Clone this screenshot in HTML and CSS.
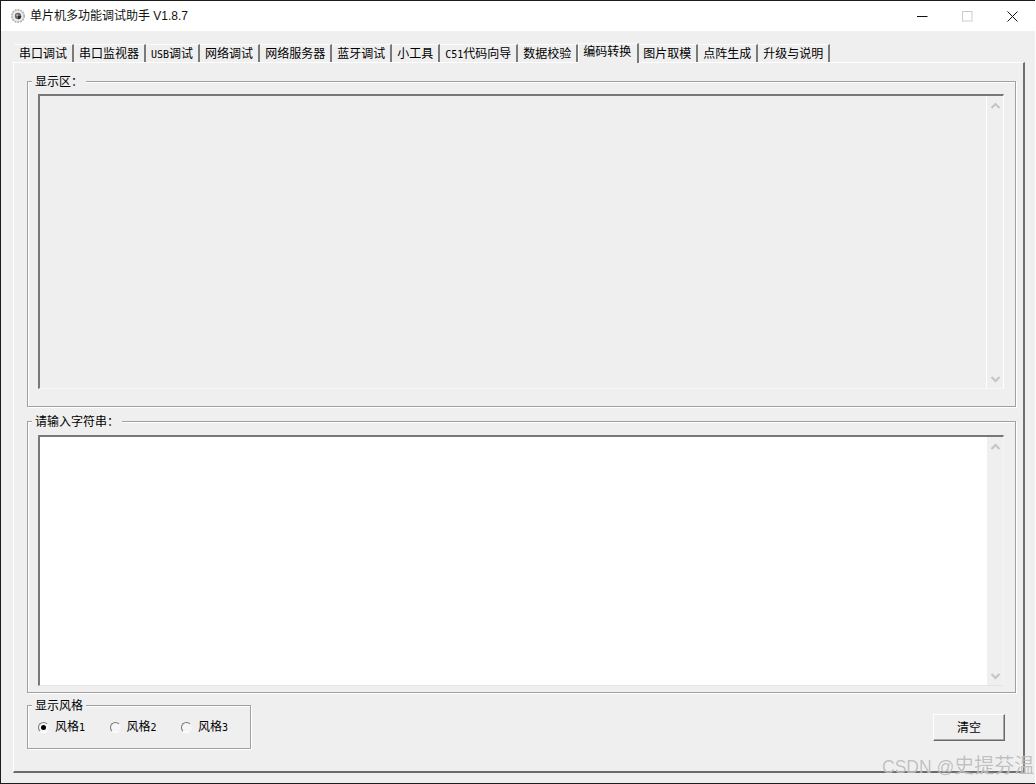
FILE: index.html
```html
<!DOCTYPE html>
<html lang="zh-CN">
<head>
<meta charset="utf-8">
<title>单片机多功能调试助手 V1.8.7</title>
<link rel="stylesheet" href="styles.css">
</head>
<body>
<div class="window">
  <header class="titlebar">
    <svg class="app-icon" width="16" height="16" viewBox="0 0 16 16">
      <circle cx="8" cy="8" r="6.2" fill="#e2e2e2" stroke="#b4b4b4" stroke-width="1.8" stroke-dasharray="1.8 1"/>
      <circle cx="8" cy="8" r="4.9" fill="#ededed"/>
      <circle cx="8" cy="8" r="3.2" fill="#6c6c6c"/>
      <path d="M8 11.2A3.2 3.2 0 0 0 11.2 8H8Z" fill="#2e2e2e"/>
      <circle cx="7.2" cy="7.2" r="1" fill="#bdbdbd"/>
    </svg>
    <span class="title">单片机多功能调试助手 V1.8.7</span>
    <div class="controls">
      <span class="ctrl"><svg width="11" height="11" viewBox="0 0 11 11"><path d="M0 5.5H10.5" stroke="#111" stroke-width="1"/></svg></span>
      <span class="ctrl"><svg width="11" height="11" viewBox="0 0 11 11"><rect x=".5" y=".5" width="9.5" height="9.5" fill="none" stroke="#ccc"/></svg></span>
      <span class="ctrl"><svg width="11" height="11" viewBox="0 0 11 11"><path d="M.5 .5L10.5 10.5M10.5 .5L.5 10.5" stroke="#111" stroke-width="1"/></svg></span>
    </div>
  </header>

  <nav class="tabs">
    <span class="tab">串口调试</span>
    <span class="tab">串口监视器</span>
    <span class="tab"><span class="lat">USB</span>调试</span>
    <span class="tab">网络调试</span>
    <span class="tab">网络服务器</span>
    <span class="tab">蓝牙调试</span>
    <span class="tab">小工具</span>
    <span class="tab"><span class="lat">C51</span>代码向导</span>
    <span class="tab">数据校验</span>
    <span class="tab tab-active">编码转换</span>
    <span class="tab">图片取模</span>
    <span class="tab">点阵生成</span>
    <span class="tab">升级与说明</span>
  </nav>

  <main class="panel">
    <section class="group group-display">
      <span class="legend">显示区：</span>
      <div class="field field-gray">
        <div class="text-area"></div>
        <div class="scrollbar scrollbar-lined">
          <svg width="11" height="8" viewBox="0 0 11 8"><path d="M1.5 6L5.5 2L9.5 6" fill="none" stroke="#c4c4c4" stroke-width="2"/></svg>
          <svg width="11" height="8" viewBox="0 0 11 8"><path d="M1.5 2L5.5 6L9.5 2" fill="none" stroke="#c4c4c4" stroke-width="2"/></svg>
        </div>
      </div>
    </section>

    <section class="group group-input">
      <span class="legend">请输入字符串：</span>
      <div class="field field-white">
        <div class="text-area"></div>
        <div class="scrollbar">
          <svg width="11" height="8" viewBox="0 0 11 8"><path d="M1.5 6L5.5 2L9.5 6" fill="none" stroke="#c4c4c4" stroke-width="2"/></svg>
          <svg width="11" height="8" viewBox="0 0 11 8"><path d="M1.5 2L5.5 6L9.5 2" fill="none" stroke="#c4c4c4" stroke-width="2"/></svg>
        </div>
      </div>
    </section>

    <div class="bottom-row">
      <section class="group group-style">
        <span class="legend">显示风格</span>
        <div class="radios">
          <label class="radio"><span class="dot dot-on"></span><span>风格<span class="lat">1</span></span></label>
          <label class="radio"><span class="dot"></span><span>风格<span class="lat">2</span></span></label>
          <label class="radio"><span class="dot"></span><span>风格<span class="lat">3</span></span></label>
        </div>
      </section>
      <button class="clear-btn" type="button">清空</button>
    </div>
  </main>

  <div class="watermark"><span class="wm-lat">CSDN @</span>史提芬温</div>
</div>
</body>
</html>
```

FILE: styles.css
```css
* { box-sizing: border-box; }

html, body {
  margin: 0;
  padding: 0;
  width: 1036px;
  height: 784px;
  overflow: hidden;
  background: #fff;
}

body {
  font-family: "Noto Sans CJK SC", "Liberation Sans", sans-serif;
  font-size: 12px;
  line-height: 16px;
  color: #000;
}

.window {
  position: relative;
  display: flex;
  flex-direction: column;
  width: 1035px;
  height: 784px;
  background: #efefef;
  border-top: 1px solid #1c1c1c;
  border-left: 1px solid #1c1c1c;
  border-bottom: 1px solid #1c1c1c;
}

.titlebar {
  display: flex;
  align-items: center;
  flex: none;
  height: 30px;
  padding-left: 9px;
  background: #fff;
}

.app-icon { flex: none; }

.title {
  margin-left: 4px;
  font-family: "Liberation Sans", "Noto Sans CJK SC", sans-serif;
  font-size: 12px;
  color: #111;
}

.controls {
  display: flex;
  margin-left: auto;
}

.ctrl {
  display: flex;
  align-items: center;
  justify-content: center;
  width: 45px;
  height: 30px;
}

.tabs {
  display: flex;
  align-items: flex-end;
  flex: none;
  height: 31px;
  padding-left: 13px;
}

.tab {
  flex: none;
  height: 18px;
  padding: 0 5px;
  line-height: 15px;
  white-space: nowrap;
  border-top: 1px solid #fbfbfb;
  border-right: 2px solid #7a7a7a;
}

.tab-active {
  position: relative;
  z-index: 1;
  height: 20px;
  margin-right: -1px;
  margin-bottom: -1px;
  padding: 0 6px 0 4px;
  line-height: 14px;
  background: #efefef;
  border-left: 1px solid #fff;
}

.lat {
  font-family: "DejaVu Sans Mono", monospace;
  font-size: 10px;
}

.panel {
  display: flex;
  flex-direction: column;
  flex: none;
  width: 1012px;
  height: 711px;
  margin-left: 12px;
  padding: 18px 7px 0 13px;
  border-top: 1px solid #fff;
  border-left: 1px solid #fff;
  border-right: 2px solid #707070;
  border-bottom: 2px solid #6a6a6a;
}

.group {
  position: relative;
  flex: none;
  border: 1px solid #a0a0a0;
  box-shadow: 1px 1px 0 #fff, inset 1px 1px 0 #fff;
}

.legend {
  position: absolute;
  top: -9px;
  left: 4px;
  padding: 0 3px;
  background: #efefef;
}

.group-display {
  width: 989px;
  height: 326px;
  padding: 12px 11px 17px 10px;
}

.group-input {
  width: 989px;
  height: 272px;
  margin-top: 14px;
  padding: 13px 11px 6px 10px;
}

.field {
  display: flex;
  height: 100%;
  border-top: 2px solid #787878;
  border-left: 2px solid #787878;
  border-right: 1px solid #fff;
  border-bottom: 1px solid #f6f6f6;
}

.field-gray { background: #efefef; }
.field-white { background: #fff; border-bottom-color: #e4e4e4; border-right-color: #f4f4f4; }

.text-area { flex: 1; }

.scrollbar {
  display: flex;
  flex-direction: column;
  justify-content: space-between;
  align-items: center;
  flex: none;
  width: 16px;
  padding: 6px 0 5px;
  background: #efefef;
}

.scrollbar-lined { border-left: 1px solid #fff; width: 17px; }

.bottom-row {
  display: flex;
  align-items: flex-start;
  justify-content: space-between;
  flex: none;
  margin-top: 12px;
}

.group-style {
  width: 224px;
  height: 44px;
}

.radios {
  display: flex;
  padding: 13px 0 0 10px;
}

.radio {
  display: flex;
  align-items: center;
  flex: none;
  width: 71.5px;
  height: 16px;
}

.dot {
  position: relative;
  flex: none;
  width: 11px;
  height: 11px;
  margin-right: 6px;
  border-radius: 50%;
  background: #f6f6f6;
  border: 1px solid;
  border-color: #777 #f4f4f4 #fff #777;
}

.dot-on::after {
  content: "";
  position: absolute;
  top: 2px;
  left: 2px;
  width: 5px;
  height: 5px;
  border-radius: 50%;
  background: #000;
}

.clear-btn {
  flex: none;
  width: 72px;
  height: 27px;
  margin: 9px 11px 0 0;
  padding: 0 0 2px;
  font: inherit;
  color: #000;
  background: #efefef;
  border: 1px solid;
  border-color: #fff #6a6a6a #6a6a6a #fff;
  box-shadow: inset -1px -1px 0 #a8a8a8;
}

.watermark {
  position: absolute;
  top: 752px;
  left: 881px;
  font-size: 20px;
  line-height: 24px;
  white-space: nowrap;
  color: rgba(140, 140, 140, .55);
  text-shadow: 0 0 1px rgba(255, 255, 255, .9);
}

.wm-lat {
  font-family: "Liberation Sans", sans-serif;
  font-size: 17.5px;
}
```
